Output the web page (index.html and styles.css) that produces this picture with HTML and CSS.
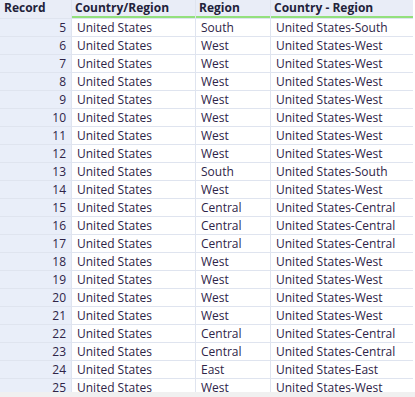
FILE: index.html
```html
<!DOCTYPE html>
<html>
<head>
<meta charset="utf-8">
<link rel="stylesheet" href="styles.css">
</head>
<body>
<div class="view">
  <div class="grid" id="grid">
    <div class="hd rec">Record</div>
    <div class="hd col">Country/Region</div>
    <div class="hd col">Region</div>
    <div class="hd col">Country - Region</div>
  </div>
  <div class="hscroll"></div>
</div>
<script src="app.js"></script>
</body>
</html>
```
FILE: styles.css
```css
html, body { margin: 0; padding: 0; background: #ffffff; }
body { font-family: "Open Sans", "Noto Sans", sans-serif; font-size: 12px; }
.view { width: 415px; height: 397px; overflow: hidden; background: #f3f4f7; }
.grid {
  display: grid;
  grid-template-columns: 71px 123px 74px 142px;
  grid-template-rows: 18px;
  grid-auto-rows: 17px;
  gap: 1px;
  width: 413px;
  height: 392px;
  overflow: hidden;
  background: #dfe4ef;
  border-right: 2px solid #ffffff;
  box-sizing: content-box;
  align-content: start;
}
.hd {
  background: #e9edf7;
  font-weight: bold;
  color: #22223a;
  line-height: 16px;
  padding-left: 4px;
  white-space: nowrap;
  overflow: hidden;
}
.hd.col { border-bottom: 2px solid #93e07d; padding-left: 3px; }
.cell {
  background: #ffffff;
  color: #2e2448;
  padding-left: 5px;
  line-height: 17px;
  white-space: nowrap;
  overflow: hidden;
}
.cell.num {
  background: #e9eef9;
  text-align: right;
  padding-left: 0;
  padding-right: 5px;
}
.hscroll { height: 5px; background: #f0f0f0; }
```
FILE: app.js
```js
var rows = [
[5,"South"],[6,"West"],[7,"West"],[8,"West"],[9,"West"],[10,"West"],[11,"West"],[12,"West"],
[13,"South"],[14,"West"],[15,"Central"],[16,"Central"],[17,"Central"],[18,"West"],[19,"West"],
[20,"West"],[21,"West"],[22,"Central"],[23,"Central"],[24,"East"],[25,"West"]];
var g = document.getElementById("grid");
rows.forEach(function(r){
  var vals = [[String(r[0]),"cell num"],["United States","cell"],[r[1],"cell"],["United States-"+r[1],"cell"]];
  vals.forEach(function(v){
    var d = document.createElement("div");
    d.className = v[1];
    d.textContent = v[0];
    g.appendChild(d);
  });
});
```
